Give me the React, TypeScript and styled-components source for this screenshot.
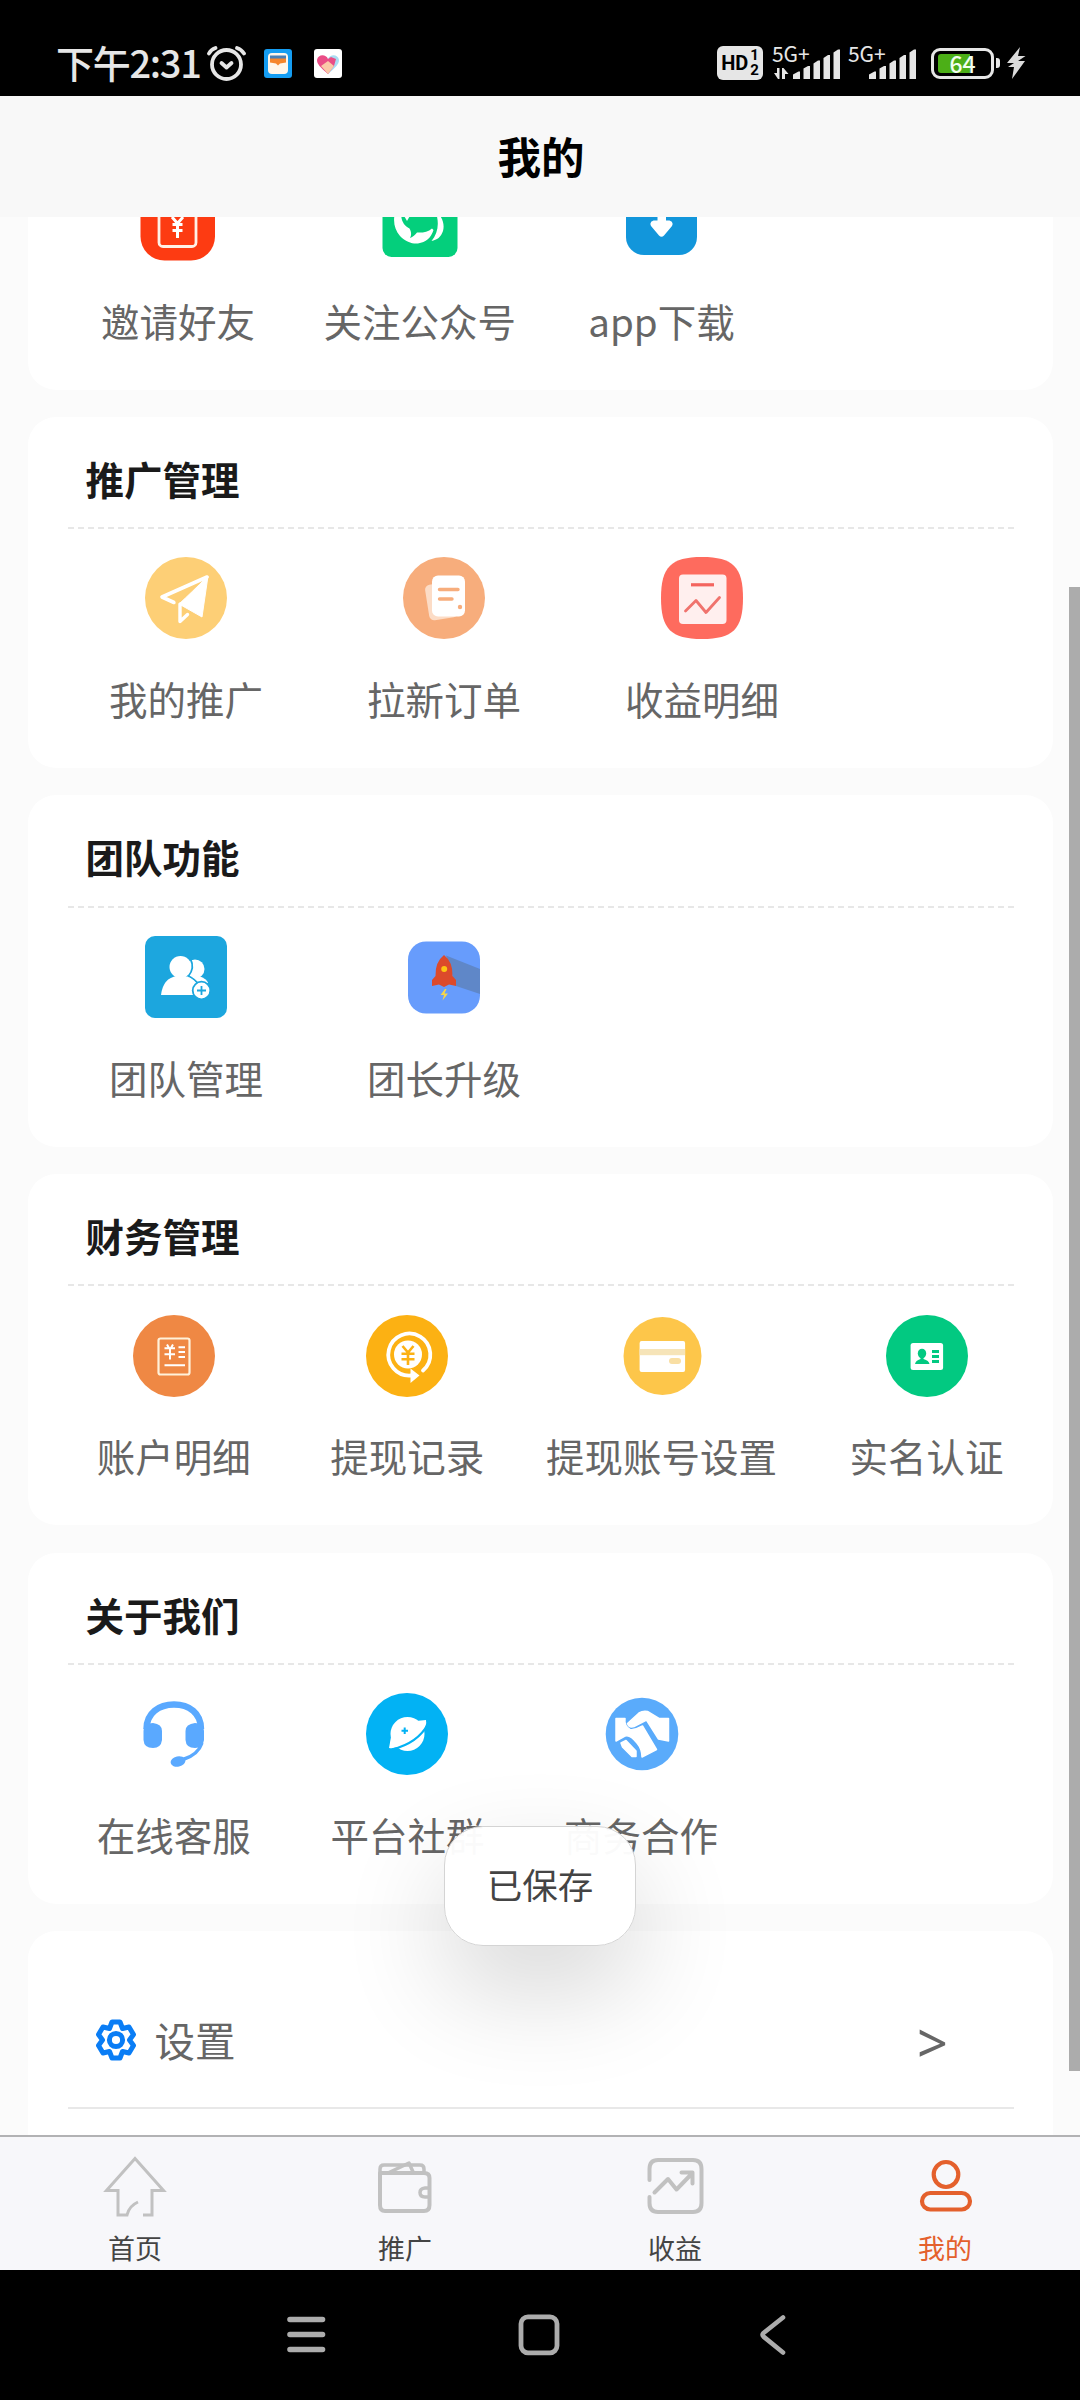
import React from "react";
import styled, { createGlobalStyle } from "styled-components";

const GlobalStyle = createGlobalStyle`
  * { box-sizing: border-box; }
  body {
    margin: 0;
    background: #000;
    font-family: "Noto Sans CJK SC", "Noto Sans", sans-serif;
  }
  svg { display: block; }
`;

const Screen = styled.div`
  width: 1080px;
  height: 2400px;
  display: flex;
  flex-direction: column;
  overflow: hidden;
  position: relative;
  background: #fbfbfb;
`;

/* ---------- system status bar ---------- */

const StatusBar = styled.header`
  height: 96px;
  flex: none;
  background: #000;
  color: #e6e6e6;
  display: flex;
  justify-content: space-between;
  align-items: flex-start;
  padding: 44px 54px 0 56px;
`;

const StatusGroup = styled.div`
  display: flex;
  align-items: center;
  height: 38px;
`;

const Clock = styled.span`
  width: 150px;
  padding-bottom: 2px;
  font-size: 38px;
  line-height: 38px;
  font-weight: 500;
  letter-spacing: -1.3px;
  white-space: nowrap;
`;

const AppBadge = styled.span<{ $gap: number; $bg: string }>`
  width: 28px;
  height: 29px;
  margin-left: ${(p) => p.$gap}px;
  border-radius: 3px;
  overflow: hidden;
  background: ${(p) => p.$bg};
`;

const HdBadge = styled.span`
  width: 46px;
  height: 34px;
  border-radius: 6px;
  background: #e6e6e6;
  color: #000;
  display: flex;
  align-items: center;
  justify-content: center;
  gap: 2px;
  font-family: Roboto, sans-serif;
  font-weight: 700;
  font-size: 20px;
  margin-right: 9px;
`;

const SimStack = styled.span`
  display: flex;
  flex-direction: column;
  font-size: 15px;
  line-height: 15px;
`;

const Signal = styled.span`
  display: flex;
  align-items: flex-end;
  width: 69px;
  height: 34px;
  margin-right: 7px;
  position: relative;
  justify-content: flex-end;
`;

const SignalLabel = styled.span`
  position: absolute;
  left: 0;
  top: -2px;
  font-family: "Noto Sans CJK SC", sans-serif;
  font-size: 21px;
  line-height: 18px;
  letter-spacing: -0.1px;
`;

const Battery = styled.span`
  width: 63px;
  height: 31px;
  margin-left: 7px;
  border: 3px solid #e6e6e6;
  border-radius: 9px;
  padding: 3px 4px;
  position: relative;
  display: flex;
`;

const BatteryFill = styled.span`
  width: 32px;
  border-radius: 3px 0 0 3px;
  background: #4caf17;
`;

const BatteryText = styled.span`
  position: absolute;
  inset: 0;
  text-align: center;
  font-size: 23px;
  line-height: 24px;
  font-weight: 500;
  color: #f2fff0;
`;

const BatteryNub = styled.span`
  width: 4px;
  height: 10px;
  margin: 0 7px 0 2px;
  border-radius: 0 3px 3px 0;
  background: #e6e6e6;
`;

/* ---------- page ---------- */

const TitleBar = styled.h1`
  margin: 0;
  padding-left: 2px;
  height: 121px;
  flex: none;
  background: #f8f8f8;
  color: #000;
  font-size: 43.5px;
  line-height: 120px;
  font-weight: 700;
  text-align: center;
`;

const Content = styled.main`
  flex: none;
  height: 1918px;
  padding: 0 27px 0 28px;
  overflow: hidden;
`;

const Card = styled.section`
  height: 351.2px;
  margin-bottom: 27.5px;
  background: #fff;
  border-radius: 28px;
  overflow: hidden;
`;

const ScrolledCard = styled(Card)`
  height: 173px;
  margin-bottom: 26.7px;
  border-radius: 0 0 28px 28px;
  display: flex;
  flex-direction: column;
  justify-content: flex-end;
`;

const CardTitle = styled.h2`
  margin: 0 39px 0 40px;
  padding: 14px 0 0 17.5px;
  height: 112.2px;
  border-bottom: 2px dashed #e7e7e7;
  color: #1a1a1a;
  font-size: 38.5px;
  line-height: 94px;
  font-weight: 700;
`;

const Entries = styled.div<{ $cols: string }>`
  height: 239px;
  flex: none;
  padding: 28.5px 0 0 29px;
  display: grid;
  grid-template-columns: ${(p) => p.$cols};
`;

const Entry = styled.a`
  display: flex;
  flex-direction: column;
  align-items: center;
  min-width: 0;
`;

const EntryLabel = styled.span`
  margin-top: 30.5px;
  color: #666;
  font-size: 38.5px;
  line-height: 56px;
  white-space: nowrap;
`;

const SettingsCard = styled(Card)`
  height: 300px;
  padding: 42px 39px 0 40px;
`;

const SettingsRow = styled.div`
  height: 136px;
  display: flex;
  align-items: center;
  padding: 0 66px 0 27px;
  border-bottom: 2px solid #e8e8e8;
  color: #666;
`;

const SettingsLabel = styled.span`
  flex: 1;
  margin-left: 17.5px;
  font-size: 40.5px;
  line-height: 60px;
`;

const Chevron = styled.span`
  padding-top: 3px;
  font-family: "Noto Sans", sans-serif;
  font-size: 54px;
  line-height: 60px;
`;

const ScrollThumb = styled.div`
  position: absolute;
  left: 1069px;
  top: 587px;
  width: 11px;
  height: 1484px;
  background: #acacac;
`;

const Toast = styled.div`
  position: absolute;
  left: 444px;
  top: 1826px;
  width: 192px;
  height: 120px;
  border-radius: 39px;
  border: 1px solid #d4d4d4;
  background: rgba(255, 255, 255, 0.97);
  box-shadow: 0 44px 104px rgba(0, 0, 0, 0.16);
  color: #444;
  font-size: 35.5px;
  line-height: 113px;
  text-align: center;
`;

/* ---------- bottom bars ---------- */

const TabBar = styled.nav`
  flex: none;
  height: 135px;
  background: #f7f7fa;
  border-top: 2px solid #b2b2b4;
  display: grid;
  grid-template-columns: repeat(4, 1fr);
`;

const Tab = styled.a<{ $active?: boolean }>`
  display: flex;
  flex-direction: column;
  align-items: center;
  padding-top: 17px;
  color: ${(p) => (p.$active ? "#e4602c" : "#444")};
  font-size: 27px;
  line-height: 38px;
  svg { color: ${(p) => (p.$active ? "#e4602c" : "#c1c1c1")}; margin-bottom: 10.5px; }
`;

const SystemNav = styled.footer`
  flex: none;
  height: 130px;
  background: #000;
  display: grid;
  grid-template-columns: 232px 233px 1fr;
  align-items: center;
  padding-left: 286px;
`;

/* ---------- icons ---------- */

const Icon = ({ children }: { children: React.ReactNode }) => (
  <svg width="82" height="82" viewBox="0 0 82 82" fill="none">
    {children}
  </svg>
);

const InviteIcon = () => (
  <Icon>
    <rect x="3.500" y="4.5" width="74.500" height="76" rx="24" fill="#fd3b12" />
    <rect x="22" y="16" width="37" height="50.5" rx="4" stroke="#fff1e6" strokeWidth="2.8" />
    <path d="M35 37l5.5 6.5L46 37M35.500 44.500h10M35.500 50.500h10M40.500 43v15" stroke="#fff" strokeWidth="3" />
  </Icon>
);

const WechatIcon = () => (
  <Icon>
    <rect x="3.500" y="4" width="75" height="73" rx="9" fill="#04cf7c" />
    <path d="M19 26C13 36 14 48 21 56C27 62 33 64 39 63.500C47 62 52 58 54.500 50L53 48.500C49 52 43 53 38 52.500C36 55 34 57 31 58C33 55 32 51 30.500 48.500C23 45 20 36 24 26Z" fill="#fff" />
    <path d="M24 34L28 41L32 34Z" fill="#fff" />
    <path d="M56 30C63 36 66 44 64 51C62 57 58 60 52.500 61C59 53 61 43 56 30Z" fill="#fff" />
  </Icon>
);

const DownloadIcon = () => (
  <Icon>
    <rect x="6" y="5" width="71" height="70" rx="18" fill="#1296db" />
    <path d="M37.500 22H46V40.500H49.500Q54 42 52 46L44 55.500Q41.500 58 39 55.500L31 46Q29 42 33.500 40.500H37.500Z" fill="#fff" />
  </Icon>
);

const PlaneIcon = () => (
  <Icon>
    <circle cx="41" cy="41" r="41" fill="#fdcf76" />
    <path d="M62 20L17 40L29 45.500" stroke="#fff" strokeWidth="3.600" strokeLinejoin="round" strokeLinecap="round" />
    <path d="M63 19L57 60L34 47Q46 36 63 19Z" fill="#fff" stroke="#fff" strokeWidth="1" strokeLinejoin="round" />
    <path d="M35 47V64.500L42.500 57.500" stroke="#fff" strokeWidth="3.400" strokeLinejoin="round" strokeLinecap="round" />
    <path d="M57 25Q44 34 33.500 46L30 45Q42 35 57 25Z" fill="#fdcf76" />
  </Icon>
);

const OrdersIcon = () => (
  <Icon>
    <circle cx="41" cy="41" r="41" fill="#f7ad7c" />
    <rect x="24" y="26" width="29" height="36" rx="5" transform="rotate(-9 38 44)" fill="#fcdcc6" />
    <rect x="29" y="18.500" width="33" height="41" rx="6" fill="#fff" />
    <path d="M36.500 32.500H55M36.500 42H49" stroke="#f7ad7c" strokeWidth="3.400" strokeLinecap="round" />
    <circle cx="57" cy="50" r="2.200" fill="#f7ad7c" />
  </Icon>
);

const IncomeIcon = () => (
  <Icon>
    <path d="M0 41C0 10 10 0 41 0S82 10 82 41S72 82 41 82S0 72 0 41Z" fill="#fe6b5e" />
    <rect x="18" y="17.500" width="47.500" height="49.500" rx="4" fill="#ffefee" />
    <path d="M30 27.800H53" stroke="#f4645e" strokeWidth="3.200" />
    <path d="M24.500 54L35 43.500L45 55.500L58.500 40.500" stroke="#f0736d" strokeWidth="2.800" strokeLinejoin="round" strokeLinecap="round" />
  </Icon>
);

const TeamIcon = () => (
  <Icon>
    <rect width="82" height="82" rx="10" fill="#1ca6de" />
    <ellipse cx="50" cy="33" rx="9.500" ry="9.500" fill="#fff" />
    <path d="M42 40H54Q62 43 63 47L52 50Z" fill="#fff" />
    <circle cx="35.500" cy="31" r="11" fill="#fff" />
    <path d="M45.500 23Q50 32 43.500 40Q51 44 53 48" stroke="#1ca6de" strokeWidth="1.800" />
    <path d="M16 59Q18 42 32 40H40Q53 43 54 59Z" fill="#fff" />
    <circle cx="56.500" cy="54.500" r="8.800" fill="#fff" stroke="#1ca6de" strokeWidth="1.800" />
    <path d="M56.500 50V59M52 54.500H61" stroke="#1ca6de" strokeWidth="1.800" />
  </Icon>
);

const RocketIcon = () => (
  <Icon>
    <rect x="5" y="5.500" width="72" height="72" rx="18" fill="#679cfc" />
    <path d="M43 19.500L77 33V58L53 50Z" fill="#5f87c8" />
    <path d="M41 19Q50 26 49.500 40L53 44V50L46 48.500L41 51L36 48.500L29 50V44L32.500 40Q32 26 41 19Z" fill="#dc4a2b" />
    <circle cx="41.200" cy="33" r="3" fill="#fdc513" />
    <path d="M42 53L37.500 59H41L39.500 64.500L45 57.500H41.500L43.500 53Z" fill="#f5d64a" />
  </Icon>
);

const AccountIcon = () => (
  <Icon>
    <circle cx="41" cy="41" r="41" fill="#ef8844" />
    <rect x="25.500" y="23.500" width="31" height="36" rx="2" stroke="#fff1da" strokeWidth="2.200" />
    <path d="M34 29.500L36 33M40 29.500L38 33M31.500 33.300H42M31.500 39.300H42M37 33V44.500" stroke="#fff" strokeWidth="2" />
    <path d="M45.500 32.300H52M45.500 37H52M45.500 42H52M31.500 50.300H52" stroke="#fff" strokeWidth="2" />
  </Icon>
);

const WithdrawIcon = () => (
  <Icon>
    <circle cx="41" cy="41" r="41" fill="#fcb113" />
    <path d="M45 60.500A21 21 0 1 1 57 55.500" stroke="#fff" strokeWidth="3.800" strokeLinecap="round" />
    <path d="M44.500 53.500L53.500 60.500L44.500 68Z" fill="#fff" />
    <circle cx="42" cy="39.500" r="14" fill="#fff" />
    <path d="M36.500 31L42 37.500L47.500 31M35.500 38.800H48.500M35.500 44.200H48.500M42 37V50" stroke="#fcb113" strokeWidth="2.600" />
  </Icon>
);

const BankCardIcon = () => (
  <Icon>
    <circle cx="41.500" cy="41" r="39" fill="#fdc64a" />
    <rect x="18.600" y="26" width="45.500" height="31" rx="2" fill="#fff" />
    <rect x="18.600" y="34" width="45.500" height="6.200" fill="#f6e4b8" />
    <rect x="48" y="43" width="12" height="6" rx="3" fill="#f9dfa4" />
  </Icon>
);

const IdIcon = () => (
  <Icon>
    <circle cx="41" cy="41" r="41" fill="#02c981" />
    <rect x="24.600" y="28" width="32.500" height="27" rx="2.500" fill="#fff" />
    <ellipse cx="36" cy="38.500" rx="4.200" ry="4.800" fill="#02c981" />
    <path d="M34.500 41H37.500V44Q43 45.500 43.500 49H29Q29.500 45.500 34.500 44Z" fill="#02c981" />
    <path d="M46 36.500H53M46 41.500H53M46 46.500H53" stroke="#02c981" strokeWidth="3" />
  </Icon>
);

const ServiceIcon = () => (
  <Icon>
    <path d="M13.500 36C13.500 20 26 11.500 41 11.500S68 20 68 36" stroke="#5aa9ff" strokeWidth="6.400" />
    <path d="M10.500 38Q11 30 20 30Q29 31 29 38V47Q28 55 20 55Q11 55 10.500 47Z" fill="#5aa9ff" />
    <path d="M71 38Q70 30 62 30Q52.500 31 52.500 38V47Q53 55 62 55Q70 55 71 47Z" fill="#5aa9ff" />
    <path d="M69 50Q65 62 50 66.500" stroke="#5aa9ff" strokeWidth="3.400" />
    <ellipse cx="45" cy="68.500" rx="7.500" ry="5.200" transform="rotate(-12 45 68.500)" fill="#5aa9ff" />
  </Icon>
);

const PlanetIcon = () => (
  <Icon>
    <circle cx="41" cy="41" r="41" fill="#02b2f4" />
    <circle cx="41.500" cy="41" r="17" fill="#fff" />
    <path d="M50 28L60 27Q61 32 57 38Z" fill="#fff" />
    <path d="M25 44L23 55Q30 56 36 52Z" fill="#fff" />
    <path d="M62 31Q52 50 26 56.500" stroke="#02b2f4" strokeWidth="2.200" />
    <path d="M38.700 34.500V41M35.500 37.700H42" stroke="#02b2f4" strokeWidth="2" />
  </Icon>
);

const HandshakeIcon = () => (
  <Icon>
    <circle cx="42" cy="41" r="36.300" fill="#5aabfb" />
    <path d="M68.500 25.500V48L58.500 46L46.500 27L34 33.500Q29 35 27.500 30.500L39 20Q43 17.500 47.500 18.500L59 25.500Z" fill="#fff" stroke="#fff" strokeWidth="1.500" strokeLinejoin="round" />
    <path d="M16 25.500H25Q24 33 30 36.500Q34 37.500 42.500 33L56.500 56.500L42 64Q42 56 37 50Q30 41 25 43L16 48Z" fill="#fff" stroke="#fff" strokeWidth="1.500" strokeLinejoin="round" />
    <path d="M21 50L26 47.500L36 58V63.500H32L22.500 54Z" fill="#fff" stroke="#fff" strokeWidth="1.500" strokeLinejoin="round" />
  </Icon>
);

const GearIcon = () => (
  <svg width="42" height="42" viewBox="0 0 42 42" fill="none" stroke="#0a7df5" strokeWidth="5" strokeLinejoin="round">
    <path d="M17 3H25L27.500 9.500L34 8L38.500 15.500L34.500 21L38.500 26.500L34 34L27.500 32.500L25 39H17L14.500 32.500L8 34L3.500 26.500L7.500 21L3.500 15.500L8 8L14.500 9.500Z" />
    <circle cx="21" cy="21" r="6.600" />
  </svg>
);

const SignalBars = ({ arrows }: { arrows?: boolean }) => (
  <svg width="69" height="34" viewBox="0 0 69 34" fill="#e6e6e6">
    {arrows && <path d="M2 27H5V22H7.500V33H6ZM10 33V22H11.500L16.500 28H13V33Z" />}
    <path d="M21 33V28.500L26.500 25.500H28V33Z" />
    <path d="M31.500 33V22.500L36 20H38V33Z" />
    <path d="M41.500 33V17.500L46 14.500H48V33Z" />
    <path d="M51.500 33V12L56 9H58V33Z" />
    <path d="M61.500 33V6.500L66 3.500H68V33Z" />
  </svg>
);

const groups = [
  {
    title: "推广管理",
    cols: "repeat(3, 258px)",
    items: [
      ["我的推广", PlaneIcon],
      ["拉新订单", OrdersIcon],
      ["收益明细", IncomeIcon],
    ],
  },
  {
    title: "团队功能",
    cols: "repeat(2, 258px)",
    items: [
      ["团队管理", TeamIcon],
      ["团长升级", RocketIcon],
    ],
  },
  {
    title: "财务管理",
    cols: "233.5px 233.5px 275px 255px",
    items: [
      ["账户明细", AccountIcon],
      ["提现记录", WithdrawIcon],
      ["提现账号设置", BankCardIcon],
      ["实名认证", IdIcon],
    ],
  },
  {
    title: "关于我们",
    cols: "repeat(3, 233.6px)",
    items: [
      ["在线客服", ServiceIcon],
      ["平台社群", PlanetIcon],
      ["商务合作", HandshakeIcon],
    ],
  },
] as { title: string; cols: string; items: [string, React.FC][] }[];

const EntryGrid = ({ cols, items }: { cols: string; items: [string, React.FC][] }) => (
  <Entries $cols={cols}>
    {items.map(([label, Glyph]) => (
      <Entry key={label}>
        <Glyph />
        <EntryLabel>{label}</EntryLabel>
      </Entry>
    ))}
  </Entries>
);

export default function App() {
  return (
    <Screen>
      <GlobalStyle />
      <StatusBar>
        <StatusGroup>
          <Clock>下午2:31</Clock>
          <svg width="40" height="38" viewBox="0 0 40 38" fill="none" stroke="#e6e6e6" strokeWidth="3.800" strokeLinecap="round">
            <circle cx="20.500" cy="20.500" r="14.500" />
            <path d="M3 9.500Q5 5.500 9.500 4M31 4Q35.500 5.500 38 9.500" />
            <path d="M15.500 19L20.500 23.500L25.500 19" strokeLinejoin="round" />
          </svg>
          <AppBadge $gap={18} $bg="#159df2">
            <svg width="28" height="29" viewBox="0 0 28 29">
              <rect x="4" y="4" width="20" height="21" rx="4" fill="#fff6ea" />
              <rect x="6" y="6.500" width="16" height="4" fill="#4b7fb5" />
              <path d="M6 9.500H22V13.500L16 14.500L14 16.500L12 14.500L6 13.500Z" fill="#f6862c" />
            </svg>
          </AppBadge>
          <AppBadge $gap={22} $bg="#fff">
            <svg width="28" height="29" viewBox="0 0 28 29">
              <path d="M14 10C16 5 24 5 25 11C25 15 22 18 14 25Z" fill="#a9dcf2" />
              <path d="M14 10C12 5 4 5 3 11C3 15 6 18 14 25L20 17L22 10L17 8Z" fill="#ea4d86" />
              <path d="M7 17L14 12L20 17L14 25Z" fill="#fbc9a8" />
            </svg>
          </AppBadge>
        </StatusGroup>
        <StatusGroup>
          <HdBadge>
            HD
            <SimStack>
              <span>1</span>
              <span>2</span>
            </SimStack>
          </HdBadge>
          <Signal>
            <SignalLabel>5G+</SignalLabel>
            <SignalBars arrows />
          </Signal>
          <Signal>
            <SignalLabel>5G+</SignalLabel>
            <SignalBars />
          </Signal>
          <Battery>
            <BatteryFill />
            <BatteryText>64</BatteryText>
          </Battery>
          <BatteryNub />
          <svg width="19" height="32" viewBox="0 0 19 32" fill="#dcdcdc">
            <path d="M13 0L0 16H7L1 20H7L5 32L18 14H11L18.500 9H11Z" />
          </svg>
        </StatusGroup>
      </StatusBar>

      <TitleBar>我的</TitleBar>

      <Content>
        <ScrolledCard>
          <EntryGrid
            cols="repeat(3, 241.8px)"
            items={[
              ["邀请好友", InviteIcon],
              ["关注公众号", WechatIcon],
              ["app下载", DownloadIcon],
            ]}
          />
        </ScrolledCard>
        {groups.map((g) => (
          <Card key={g.title}>
            <CardTitle>{g.title}</CardTitle>
            <EntryGrid cols={g.cols} items={g.items} />
          </Card>
        ))}
        <SettingsCard>
          <SettingsRow>
            <GearIcon />
            <SettingsLabel>设置</SettingsLabel>
            <Chevron>&gt;</Chevron>
          </SettingsRow>
        </SettingsCard>
      </Content>

      <TabBar>
        <Tab>
          <svg width="66" height="64" viewBox="0 0 66 64" fill="none" stroke="currentColor" strokeWidth="3">
            <path d="M41 61H50V36.500H61.500L33 4.500L4.500 36.500H16V61H25Q27 52 36 48" />
          </svg>
          首页
        </Tab>
        <Tab>
          <svg width="66" height="64" viewBox="0 0 66 64" fill="none" stroke="currentColor" strokeWidth="4" strokeLinejoin="round">
            <path d="M8 20V15Q8 11 12 11H48Q52 11 52 15V20" strokeWidth="3.500" />
            <path d="M8 19H52Q57.500 19 57.500 24V51Q57.500 57 52 57H13Q8 57 8 51Z" />
            <path d="M16 19L37 9L41.500 19" strokeWidth="3.500" />
            <path d="M57 34H53Q48 34.500 48 38.500Q48 43 53 43H57" strokeWidth="3.500" />
          </svg>
          推广
        </Tab>
        <Tab>
          <svg width="66" height="64" viewBox="0 0 66 64" fill="none" stroke="currentColor" strokeWidth="4" strokeLinejoin="round" strokeLinecap="round">
            <path d="M7.500 26V15Q7.500 6 16 6H51Q59.500 6 59.500 15V49Q59.500 58 51 58H16Q7.500 58 7.500 49V43" />
            <path d="M12.500 38.500L26 25L34.500 35.500L50 19.500M39.500 18.500H50.500V29.500" />
          </svg>
          收益
        </Tab>
        <Tab $active>
          <svg width="66" height="64" viewBox="0 0 66 64" fill="none" stroke="currentColor" strokeWidth="4.200">
            <ellipse cx="34" cy="20.500" rx="12.300" ry="12.500" />
            <rect x="10" y="39" width="48" height="16.500" rx="8.250" />
          </svg>
          我的
        </Tab>
      </TabBar>

      <SystemNav>
        <svg width="40" height="42" viewBox="0 0 40 42" stroke="#acacac" strokeWidth="5.600" strokeLinecap="round">
          <path d="M4 5.500H36.500M4 20.500H36.500M4 35.500H36.500" />
        </svg>
        <svg width="42" height="42" viewBox="0 0 42 42" fill="none" stroke="#acacac" strokeWidth="4.800">
          <rect x="3" y="2.800" width="36" height="36" rx="7" />
        </svg>
        <svg width="42" height="42" viewBox="0 0 42 42" fill="none" stroke="#acacac" strokeWidth="4.600" strokeLinecap="round" strokeLinejoin="round">
          <path d="M32 3.500L12.500 19Q10.500 20.800 12.500 22.600L32 38.500" />
        </svg>
      </SystemNav>

      <ScrollThumb />
      <Toast>已保存</Toast>
    </Screen>
  );
}
